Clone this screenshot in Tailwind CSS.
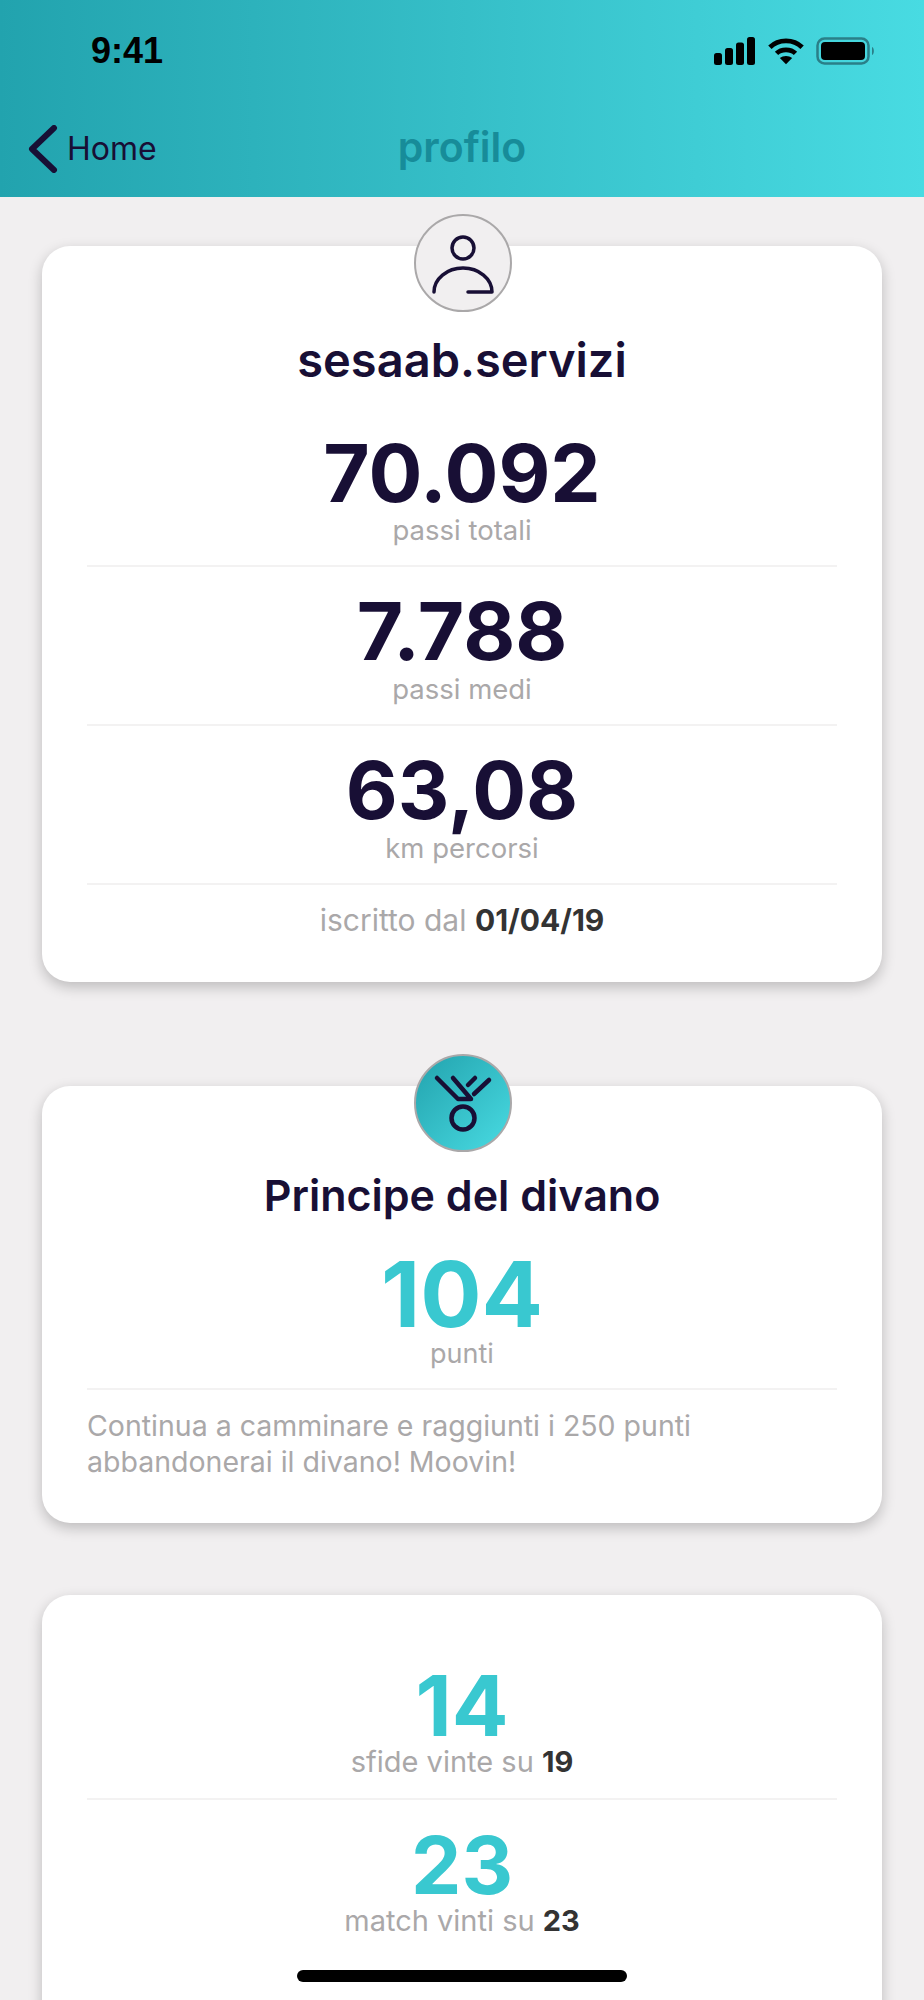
<!DOCTYPE html>
<html lang="it">
  <head>
    <meta charset="UTF-8" />
    <meta name="viewport" content="width=device-width, initial-scale=1.0" />
    <title>Profilo</title>
    <script src="https://cdn.jsdelivr.net/npm/@tailwindcss/browser@4"></script>
  </head>
  <body class="relative h-[2000px] w-[924px] overflow-hidden bg-[#f1eff0] font-['Inter',sans-serif]">
    <!-- Header -->
    <header class="relative h-[197px] bg-gradient-to-r from-[#22a3ae] to-[#48dbe2]">
      <div class="flex h-[100px] items-center justify-between pt-[2px] pl-[91px] pr-[48px]">
        <span class="font-['Liberation_Sans',sans-serif] text-[36px] leading-none font-bold text-black">9:41</span>
        <div class="flex items-center gap-[12px]">
          <svg width="42" height="28" viewBox="0 0 42 28" fill="#000">
            <rect x="0" y="16" width="8" height="12" rx="2.500" />
            <rect x="11" y="11" width="8" height="17" rx="2.500" />
            <rect x="22" y="5.500" width="8" height="22.500" rx="2.500" />
            <rect x="33" y="0" width="8" height="28" rx="2.500" />
          </svg>
          <svg width="36" height="28" viewBox="0 0 38 28" fill="none" stroke="#000" stroke-width="5">
            <path d="M2 10 C11 1 27 1 36 10" />
            <path d="M9 16.500 C14 11.500 24 11.500 29 16.500" />
            <path d="M19 28 L12.500 21.500 C16 18.500 22 18.500 25.500 21.500 Z" fill="#000" stroke="none" />
          </svg>
          <svg width="60" height="28" viewBox="0 0 60 28">
            <rect x="1.500" y="1.500" width="51" height="25" rx="7" fill="none" stroke="#2a7f88" stroke-width="2.500" />
            <rect x="5" y="5" width="44" height="18" rx="4" fill="#000" />
            <path d="M56 10 C58.500 11 58.500 17 56 18 Z" fill="#2a7f88" />
          </svg>
        </div>
      </div>
      <div class="relative flex h-[97px] items-center">
        <a class="flex items-center pl-[28px] text-[#180f35]">
          <svg width="30" height="48" viewBox="0 0 30 48" fill="none" stroke="#180f35" stroke-width="6" stroke-linecap="round" stroke-linejoin="round">
            <path d="M26 3 L4 24 L26 45" />
          </svg>
          <span class="ml-[9px] pt-[1px] text-[32px] leading-none">Home</span>
        </a>
        <h1 class="absolute inset-x-0 top-[27px] text-center text-[41px] leading-none font-semibold text-[#178c99]">profilo</h1>
      </div>
    </header>

    <main class="flex flex-col px-[42px] pt-[49px]">
      <!-- User card -->
      <section class="relative h-[736px] rounded-[28px] bg-white shadow-[0_5px_14px_rgba(0,0,0,0.22)]">
        <div class="absolute -top-[32px] left-[372px] flex h-[98px] w-[98px] items-center justify-center rounded-full border-2 border-[#aaa8a9] bg-[#f1eff0]">
          <svg width="62" height="62" viewBox="0 0 62 62" fill="none" stroke="#180f35" stroke-width="3.500" stroke-linecap="round" stroke-linejoin="round">
            <circle cx="31" cy="16" r="11" />
            <path d="M2 60 A 29 24 0 0 1 60 60 L36 60" />
          </svg>
        </div>
        <div class="flex flex-col px-[45px] text-center">
          <h2 class="mt-[86px] text-[47px] leading-[56px] font-semibold text-[#180f35]">sesaab.servizi</h2>
          <div class="mt-[45px] h-[134px] border-b-2 border-[#f3f2f2]">
            <p class="text-[80px] leading-[80px] font-bold text-[#180f35]">70.092</p>
            <p class="mt-[1px] text-[27.5px] leading-[32px] text-[#aaa8a9]">passi totali</p>
          </div>
          <div class="h-[159px] border-b-2 border-[#f3f2f2] pt-[24px]">
            <p class="text-[80px] leading-[80px] font-bold text-[#180f35]">7.788</p>
            <p class="mt-[2px] text-[27.5px] leading-[32px] text-[#aaa8a9]">passi medi</p>
          </div>
          <div class="h-[159px] border-b-2 border-[#f3f2f2] pt-[24px]">
            <p class="text-[80px] leading-[80px] font-bold text-[#180f35]">63,08</p>
            <p class="mt-[2px] text-[27.5px] leading-[32px] text-[#aaa8a9]">km percorsi</p>
          </div>
          <p class="mt-[18px] text-[30px] leading-[34px] text-[#aaa8a9]">iscritto dal <b class="font-bold text-[#333333]">01/04/19</b></p>
        </div>
      </section>

      <!-- Level card -->
      <section class="relative mt-[104px] h-[437px] rounded-[28px] bg-white shadow-[0_5px_14px_rgba(0,0,0,0.22)]">
        <div class="absolute -top-[32px] left-[372px] flex h-[98px] w-[98px] items-center justify-center rounded-full border-2 border-[#aaa8a9] bg-gradient-to-br from-[#22a3ae] to-[#48dbe2]">
          <svg width="94" height="94" viewBox="0 0 94 94" fill="none" stroke="#180f35" stroke-width="4.500" stroke-linecap="round" stroke-linejoin="round">
            <path d="M21 22 L42 43 L55 43 L37 22" />
            <path d="M52 29 L59 22" />
            <path d="M58 38 L73 24" />
            <circle cx="47" cy="62" r="11.500" />
          </svg>
        </div>
        <div class="flex flex-col px-[45px] text-center">
          <h2 class="mt-[82px] text-[43px] leading-[54px] font-semibold text-[#180f35]">Principe del divano</h2>
          <div class="mt-[28px] h-[140px] border-b-2 border-[#f3f2f2]">
            <p class="text-[91px] leading-[88px] font-bold text-[#39c8d0]">104</p>
            <p class="text-[27px] leading-[32px] text-[#aaa8a9]">punti</p>
          </div>
          <p class="mt-[18px] text-left text-[28.5px] leading-[36px] text-[#aaa8a9]">Continua a camminare e raggiunti i 250 punti abbandonerai il divano! Moovin!</p>
        </div>
      </section>

      <!-- Challenges card -->
      <section class="relative mt-[72px] h-[500px] rounded-t-[28px] bg-white shadow-[0_5px_14px_rgba(0,0,0,0.22)]">
        <div class="flex flex-col px-[45px] text-center">
          <div class="mt-[71px] h-[134px] border-b-2 border-[#f3f2f2]">
            <p class="text-[84px] leading-[80px] font-bold text-[#39c8d0]">14</p>
            <p class="-mt-[1px] text-[29px] leading-[34px] text-[#aaa8a9]">sfide vinte su <b class="font-bold text-[#333333]">19</b></p>
          </div>
          <div class="pt-[25px]">
            <p class="text-[80px] leading-[80px] font-bold text-[#39c8d0]">23</p>
            <p class="-mt-[1px] text-[29px] leading-[34px] text-[#aaa8a9]">match vinti su <b class="font-bold text-[#333333]">23</b></p>
          </div>
        </div>
      </section>
    </main>

    <!-- Home indicator -->
    <div class="absolute top-[1970px] left-[297px] h-[12px] w-[330px] rounded-full bg-black"></div>
  </body>
</html>
